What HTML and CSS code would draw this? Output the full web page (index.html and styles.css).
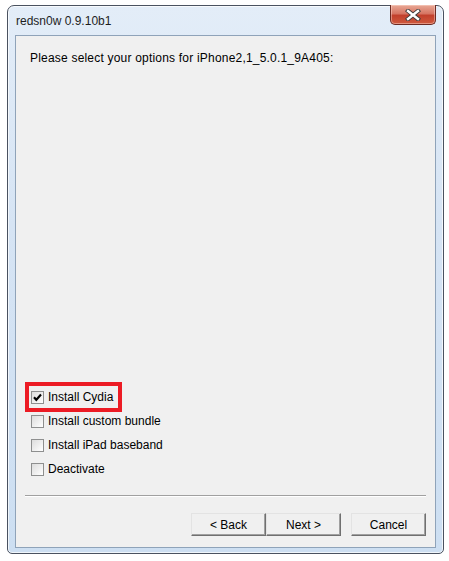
FILE: index.html
```html
<!DOCTYPE html>
<html lang="en">
  <head>
    <meta charset="UTF-8" />
    <meta name="viewport" content="width=device-width, initial-scale=1.0" />
    <title>redsn0w 0.9.10b1</title>
    <link rel="stylesheet" href="styles.css">
  </head>
  <body>
    <div class="window">
      <div class="titlebar">
        <span class="title">redsn0w 0.9.10b1</span>
        <button class="closeBtn" aria-label="Close">
          <svg width="16" height="12" viewBox="0 0 16 12">
            <path d="M3 2 L13 10 M13 2 L3 10" stroke="#3a3a3a" stroke-width="4.2" stroke-linecap="square" />
            <path d="M3 2 L13 10 M13 2 L3 10" stroke="#ffffff" stroke-width="2.4" stroke-linecap="square" />
          </svg>
        </button>
      </div>

      <div class="client">
        <p class="prompt">Please select your options for iPhone2,1_5.0.1_9A405:</p>

        <div class="options">
          <div class="row">
            <label class="option marked">
              <span class="box checked">
                <svg width="9" height="9" viewBox="0 0 9 9">
                  <path d="M1 4.2 L3.3 6.8 L8 1.5" fill="none" stroke="#000" stroke-width="2.1" />
                </svg>
              </span>
              Install Cydia
            </label>
          </div>
          <div class="row">
            <label class="option"><span class="box"></span>Install custom bundle</label>
          </div>
          <div class="row">
            <label class="option"><span class="box"></span>Install iPad baseband</label>
          </div>
          <div class="row">
            <label class="option"><span class="box"></span>Deactivate</label>
          </div>
        </div>

        <hr class="sep" />

        <div class="buttons">
          <button class="btn">&lt; Back</button>
          <button class="btn">Next &gt;</button>
          <button class="btn cancel">Cancel</button>
        </div>
      </div>
    </div>
  </body>
</html>
```

FILE: styles.css
```css
body {
  margin: 0;
  background: #ffffff;
  font-family: "Liberation Sans", Arial, sans-serif;
  font-size: 12px;
  color: #000;
}

.window {
  margin: 5px 0 0 7px;
  width: 437px;
  height: 549px;
  border: 1px solid #4a5260;
  border-radius: 7px 7px 5px 5px;
  background: linear-gradient(#e3edf8, #d6e4f4 40%, #cddff2);
  padding: 0 7px 5px 7px;
  box-sizing: border-box;
  box-shadow: inset 0 0 0 1px rgba(255, 255, 255, 0.7);
}

.titlebar {
  height: 29px;
  display: flex;
  align-items: flex-start;
  justify-content: space-between;
}

.title {
  align-self: center;
  padding-left: 1px;
  color: #1e1e1e;
}

.closeBtn {
  margin-top: -1px;
  width: 46px;
  height: 20px;
  padding: 0;
  border: 1px solid #6b2a22;
  border-top: none;
  border-radius: 0 0 5px 5px;
  background: linear-gradient(#e9a996, #d67563 45%, #c2402c 55%, #cf5a3e);
  box-shadow: inset 0 0 0 1px rgba(255, 220, 210, 0.45);
  display: flex;
  align-items: center;
  justify-content: center;
}

.client {
  height: 513px;
  box-sizing: border-box;
  border: 1px solid #8fa3b9;
  background: #f0f0f0;
  display: flex;
  flex-direction: column;
}

.prompt {
  margin: 14px 0 0 14px;
  line-height: 16px;
  letter-spacing: 0.2px;
}

.options {
  margin-top: auto;
  padding-left: 15px;
}

.row {
  height: 24px;
  display: flex;
  align-items: center;
}

.option {
  height: 18px;
  display: inline-flex;
  align-items: center;
  gap: 4px;
}

.option.marked {
  outline: 4px solid #ec1b24;
  outline-offset: 2px;
  padding-right: 3px;
}

.box {
  width: 11px;
  height: 11px;
  border: 1px solid #8e8f8f;
  background: linear-gradient(135deg, #dcdcdc, #ffffff);
  display: inline-flex;
  align-items: center;
  justify-content: center;
}

.sep {
  margin: 14px 9px 0 9px;
  border: none;
  border-top: 1px solid #a0a0a0;
  border-bottom: 1px solid #ffffff;
}

.buttons {
  display: flex;
  justify-content: flex-end;
  padding: 16px 9px 11px 0;
}

.btn {
  width: 75px;
  height: 23px;
  font-family: inherit;
  font-size: 12px;
  color: #000;
  background: #f0f0f0;
  border: 1px solid;
  border-color: #e3e3e3 #707070 #707070 #e3e3e3;
  box-shadow: inset -1px -1px 0 #a0a0a0;
  padding: 0;
}

.btn.cancel {
  margin-left: 10px;
}
```
